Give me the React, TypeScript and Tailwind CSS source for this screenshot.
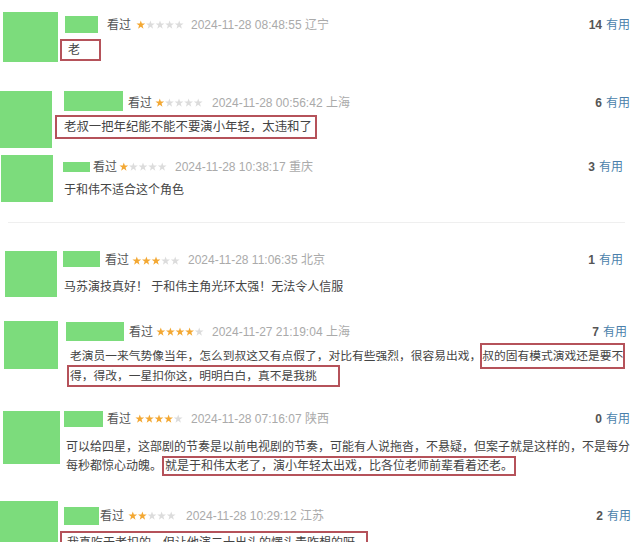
import React from "react";

const STAR =
  "5,0.2 6.12,3.46 9.57,3.52 6.81,5.59 7.82,8.88 5,6.9 2.18,8.88 3.19,5.59 0.43,3.52 3.88,3.46";

function Stars({ n }: { n: number }) {
  return (
    <svg width="48" height="10" viewBox="0 0 50 10" className="shrink-0">
      {[0, 1, 2, 3, 4].map((i) => (
        <polygon
          key={i}
          points={STAR}
          transform={`translate(${i * 10} 0)`}
          fill={i < n ? "#f3a833" : "#dcdcdc"}
        />
      ))}
    </svg>
  );
}

function Count({ n }: { n: number }) {
  return (
    <div className="ml-auto flex items-center gap-[4px] text-[12px] leading-none shrink-0">
      <span className="text-[#555] font-bold">{n}</span>
      <span className="text-[#4a7fab]">有用</span>
    </div>
  );
}

const seen = "text-[12px] leading-none text-[#555] shrink-0";
const date = "text-[12px] leading-none text-[#aaa] shrink-0 whitespace-nowrap";
const green = "bg-[#7cdc7c] shrink-0";
const box = "border-2 border-[#b5525a]";
const body = "text-[12px] text-[#444] whitespace-nowrap";

export default function App() {
  return (
    <div className="w-[636px] h-[542px] overflow-hidden bg-white font-['Liberation_Sans','Noto_Sans_CJK_SC',sans-serif]">
      {/* Block 1 */}
      <div className="h-[85px] flex">
        <div className={`${green} ml-[3px] mt-[12px] w-[55px] h-[50px]`} />
        <div className="ml-[2px] flex-1 min-w-0 pr-[6px]">
          <div className="mt-[16px] h-[17px] flex items-center">
            <div className={`${green} ml-[5px] w-[33px] h-[17px]`} />
            <span className={`${seen} ml-[9px]`}>看过</span>
            <span className="ml-[5px] flex"><Stars n={1} /></span>
            <span className={`${date} ml-[7px]`}>2024-11-28 08:48:55 辽宁</span>
            <Count n={14} />
          </div>
          <div className={`${box} mt-[6px] w-[41px] h-[22px] flex items-center pl-[6px] ${body}`}>老</div>
        </div>
      </div>

      {/* Block 2 */}
      <div className="h-[65px] flex">
        <div className={`${green} mt-[6px] w-[52px] h-[57px]`} />
        <div className="ml-[3px] flex-1 min-w-0 pr-[6px]">
          <div className="mt-[6px] h-[20px] flex items-center">
            <div className={`${green} ml-[9px] w-[59px] h-[20px]`} />
            <span className={`${seen} ml-[5px] mt-[3px]`}>看过</span>
            <span className="ml-[3px] mt-[3px] flex"><Stars n={1} /></span>
            <span className={`${date} ml-[9px] mt-[3px]`}>2024-11-28 00:56:42 上海</span>
            <div className="ml-auto mt-[3px] flex"><Count n={6} /></div>
          </div>
          <div className={`${box} mt-[4px] w-[262px] h-[24px] flex items-center pl-[7px] text-[12.4px] text-[#444] whitespace-nowrap`}>
            老叔一把年纪能不能不要演小年轻，太违和了
          </div>
        </div>
      </div>

      {/* Block 3 */}
      <div className="h-[72px] flex">
        <div className={`${green} ml-[1px] mt-[5px] w-[52px] h-[47px]`} />
        <div className="ml-[10px] flex-1 min-w-0 pr-[13px]">
          <div className="mt-[12px] h-[10px] flex items-center">
            <div className={`${green} w-[27px] h-[10px]`} />
            <span className={`${seen} ml-[3px]`}>看过</span>
            <span className="ml-[2px] flex"><Stars n={1} /></span>
            <span className={`${date} ml-[8px]`}>2024-11-28 10:38:17 重庆</span>
            <Count n={3} />
          </div>
          <div className={`${body} mt-[9px] ml-[1px] leading-[18px]`}>于和伟不适合这个角色</div>
        </div>
      </div>
      <div className="h-px w-[617px] ml-[8px] bg-[#efefef]" />

      {/* Block 4 */}
      <div className="h-[86px] flex">
        <div className={`${green} ml-[5px] mt-[28px] w-[52px] h-[46px]`} />
        <div className="ml-[6px] flex-1 min-w-0 pr-[13px]">
          <div className="mt-[28px] h-[16px] flex items-end">
            <div className={`${green} w-[37px] h-[16px]`} />
            <span className={`${seen} ml-[5px] mb-[1px]`}>看过</span>
            <span className="ml-[3px] mb-[1px] flex"><Stars n={3} /></span>
            <span className={`${date} ml-[8px] mb-[1px]`}>2024-11-28 11:06:35 北京</span>
            <div className="ml-auto mb-[1px] flex"><Count n={1} /></div>
          </div>
          <div className={`${body} mt-[11px] ml-[1px] leading-[18px]`}>
            马苏演技真好！ 于和伟主角光环太强！无法令人信服
          </div>
        </div>
      </div>

      {/* Block 5 */}
      <div className="h-[90px] flex">
        <div className={`${green} ml-[4px] mt-[12px] w-[54px] h-[48px]`} />
        <div className="ml-[9px] flex-1 min-w-0 pr-[9px]">
          <div className="mt-[13px] h-[19px] flex items-center">
            <div className={`${green} -ml-[1px] w-[58px] h-[19px]`} />
            <span className={`${seen} ml-[5px]`}>看过</span>
            <span className="ml-[3px] flex"><Stars n={4} /></span>
            <span className={`${date} ml-[8px]`}>2024-11-27 21:19:04 上海</span>
            <Count n={7} />
          </div>
          <div className="mt-[5px] h-[20px] pl-[3px] flex items-center text-[11.75px] text-[#444] whitespace-nowrap">
            <span className="shrink-0">老演员一来气势像当年，怎么到叔这又有点假了，对比有些强烈，很容易出戏，</span>
            <span className={`${box} shrink-0 h-[26px] -ml-[1px] flex items-center`}>叔的固有模式演戏还是要不</span>
          </div>
          <div className="h-[20px] flex items-center text-[11.75px] text-[#444] whitespace-nowrap">
            <span className={`${box} h-[22px] w-[273px] pl-[1px] flex items-center`}>
              得，得改，一星扣你这，明明白白，真不是我挑
            </span>
          </div>
        </div>
      </div>

      {/* Block 6 */}
      <div className="h-[95px] flex">
        <div className={`${green} ml-[3px] mt-[12px] w-[57px] h-[53px]`} />
        <div className="ml-[4px] flex-1 min-w-0 pr-[6px]">
          <div className="mt-[12px] h-[16px] flex items-center">
            <div className={`${green} w-[39px] h-[16px]`} />
            <span className={`${seen} ml-[4px]`}>看过</span>
            <span className="ml-[4px] flex"><Stars n={4} /></span>
            <span className={`${date} ml-[8px]`}>2024-11-28 07:16:07 陕西</span>
            <Count n={0} />
          </div>
          <div className={`${body} mt-[10px] h-[19px] pl-[2px] flex items-center`}>
            可以给四星，这部剧的节奏是以前电视剧的节奏，可能有人说拖沓，不悬疑，但案子就是这样的，不是每分
          </div>
          <div className={`${body} h-[19px] pl-[2px] flex items-center`}>
            <span>每秒都惊心动魄。</span>
            <span className={`${box} h-[20px] w-[354px] pl-[1px] flex items-center`}>
              就是于和伟太老了，演小年轻太出戏，比各位老师前辈看着还老。
            </span>
          </div>
        </div>
      </div>

      {/* Block 7 */}
      <div className="h-[47px] flex">
        <div className={`${green} mt-[7px] w-[58px] h-[50px]`} />
        <div className="ml-[6px] flex-1 min-w-0 pr-[5px]">
          <div className="mt-[13px] h-[18px] flex items-center">
            <div className={`${green} w-[35px] h-[18px]`} />
            <span className={`${seen} ml-[1px]`}>看过</span>
            <span className="ml-[4px] flex"><Stars n={2} /></span>
            <span className={`${date} ml-[10px]`}>2024-11-28 10:29:12 江苏</span>
            <Count n={2} />
          </div>
          <div className={`${box} ${body} mt-[6px] -ml-[4px] w-[308px] h-[24px] pl-[5px] flex items-center`}>
            我真吃于老扣的，但让他演二十出头的愣头青咋想的呀
          </div>
        </div>
      </div>
    </div>
  );
}
